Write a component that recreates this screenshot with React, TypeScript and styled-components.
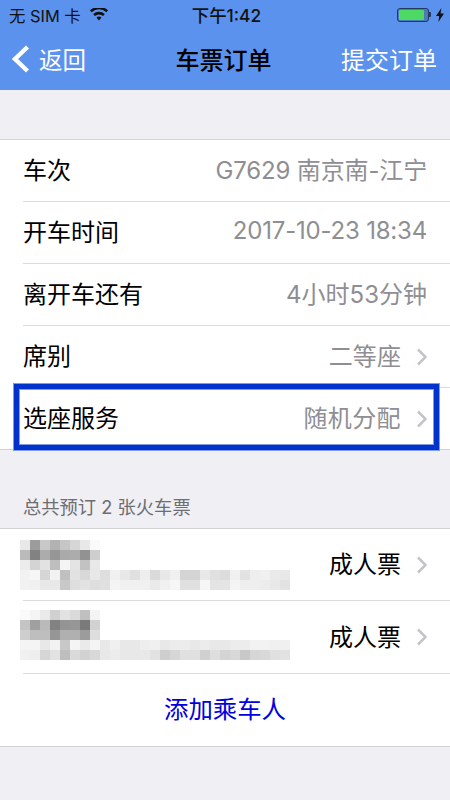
import styled, { createGlobalStyle } from "styled-components";

const FONT = `Inter, "Noto Sans CJK SC", sans-serif`;

const GlobalStyle = createGlobalStyle`
  html, body {
    margin: 0;
    padding: 0;
    background: #efeff4;
  }
  body {
    font-family: ${FONT};
    -webkit-font-smoothing: antialiased;
  }
`;

const TOP_SHADES = [
  [232, 156, 200, 178, 198, 214, 232, 250],
  [186, 130, 172, 150, 170, 172, 146, 206],
  [236, 212, 226, 190, 244, 228, 194, 232],
];
const BOTTOM_SHADES = [
  [242, 246, 214, 242, 192, 226, 216, 232, 222, 240, 232, 224, 238, 218, 232, 240, 212, 212, 232, 224, 220, 240, 226, 238, 240, 234, 232],
  [242, 240, 232, 232, 200, 222, 226, 222, 224, 244, 240, 240, 240, 234, 240, 246, 224, 224, 246, 228, 228, 244, 238, 238, 236, 232, 226],
];
const TOP_SHADES_2 = [
  [250, 244, 234, 208, 226, 218, 192, 244],
  [196, 160, 186, 130, 148, 150, 122, 210],
  [206, 190, 190, 150, 176, 176, 156, 222],
];
const BOTTOM_SHADES_2 = [
  [244, 244, 232, 242, 200, 244, 234, 244, 232, 240, 232, 232, 238, 240, 232, 236, 236, 232, 236, 232, 232, 236, 236, 242, 242, 240, 240],
  [240, 238, 214, 226, 190, 218, 210, 216, 232, 236, 232, 232, 232, 226, 206, 214, 224, 224, 208, 222, 212, 216, 200, 214, 216, 224, 226],
];

function Chevron() {
  return (
    <ChevronIcon viewBox="0 0 13 20" aria-hidden="true">
      <path d="M3 2.5 10.5 10 3 17.5" fill="none" stroke="#c4c4c9" strokeWidth="2.5" />
    </ChevronIcon>
  );
}

function Mosaic({ top, bottom, offset }: { top: number[][]; bottom: number[][]; offset: number }) {
  const cells = (rows: number[][]) =>
    rows.flat().map((shade, i) => <MosaicCell key={i} $shade={shade} />);
  return (
    <MosaicWrapper $offset={offset}>
      <MosaicTop>{cells(top)}</MosaicTop>
      <MosaicBottom>{cells(bottom)}</MosaicBottom>
    </MosaicWrapper>
  );
}

function InfoRow({
  label,
  value,
  chevron,
  height = 62,
  spacing = 0,
}: {
  label: string;
  value: string;
  chevron?: boolean;
  height?: number;
  spacing?: number;
}) {
  return (
    <Row $height={height}>
      <Label>{label}</Label>
      <Value $spacing={spacing}>{value}</Value>
      {chevron && <Chevron />}
    </Row>
  );
}

export default function App() {
  return (
    <Page>
      <GlobalStyle />
      <Header>
        <StatusBar>
          <StatusLeft>
            <span>无 SIM 卡</span>
            <svg width="18" height="13" viewBox="0 0 18 13" aria-hidden="true">
              <path
                d="M9 12.5 6.5 9.6a3.6 3.6 0 0 1 5 0zM4.9 8 3.2 6a8.6 8.6 0 0 1 11.6 0l-1.7 2a6 6 0 0 0-8.2 0zM1.6 4.2 0 2.3a13.4 13.4 0 0 1 18 0l-1.6 1.9a10.9 10.9 0 0 0-14.8 0z"
                fill="#111"
              />
            </svg>
          </StatusLeft>
          <StatusTime>下午1:42</StatusTime>
          <StatusRight>
            <Battery>
              <BatteryFill />
            </Battery>
            <BatteryCap />
            <svg width="8" height="14" viewBox="0 0 8 14" aria-hidden="true">
              <path d="M5.4 0 0 8h3.2L2.4 14 8 5.6H4.6z" fill="#111" />
            </svg>
          </StatusRight>
        </StatusBar>
        <NavBar>
          <BackLink>
            <svg width="20" height="30" viewBox="0 0 20 30" aria-hidden="true">
              <path d="M17.5 3 5 15l12.5 12" fill="none" stroke="#fff" strokeWidth="4.4" />
            </svg>
            <BackText>返回</BackText>
          </BackLink>
          <NavTitle>车票订单</NavTitle>
          <NavAction>提交订单</NavAction>
        </NavBar>
      </Header>

      <DetailSection>
        <InfoRow label="车次" value="G7629 南京南-江宁" spacing={-0.15} />
        <InfoRow label="开车时间" value="2017-10-23 18:34" spacing={-0.2} />
        <InfoRow label="离开车还有" value="4小时53分钟" />
        <InfoRow label="席别" value="二等座" chevron spacing={0.1} />
        <InfoRow label="选座服务" value="随机分配" chevron spacing={0.4} height={61} />
        <Highlight />
      </DetailSection>

      <SectionTitle>总共预订 2 张火车票</SectionTitle>

      <PassengerSection>
        <PassengerRow $height={72}>
          <Mosaic top={TOP_SHADES} bottom={BOTTOM_SHADES} offset={11} />
          <TicketType>成人票</TicketType>
          <Chevron />
        </PassengerRow>
        <PassengerRow $height={73}>
          <Mosaic top={TOP_SHADES_2} bottom={BOTTOM_SHADES_2} offset={9} />
          <TicketType>成人票</TicketType>
          <Chevron />
        </PassengerRow>
        <AddRow>添加乘车人</AddRow>
      </PassengerSection>
    </Page>
  );
}

const Page = styled.div`
  width: 450px;
  height: 800px;
  overflow: hidden;
  background: #efeff4;
  font-family: ${FONT};
`;

const Header = styled.header`
  height: 90px;
  background: #5b92ed;
`;

const StatusBar = styled.div`
  display: grid;
  grid-template-columns: 1fr auto 1fr;
  align-items: center;
  height: 29px;
  padding: 0 6px 0 9px;
  font-size: 16.4px;
  color: #111;
`;

const StatusLeft = styled.div`
  display: flex;
  align-items: center;
  gap: 9px;
`;

const StatusTime = styled.div`
  font-size: 17.4px;
  font-weight: 500;
`;

const StatusRight = styled.div`
  display: flex;
  align-items: center;
  justify-content: flex-end;
`;

const Battery = styled.div`
  box-sizing: border-box;
  width: 32px;
  height: 14px;
  padding: 1px;
  border: 1px solid #23395f;
  border-radius: 3px;
  background: #4f78b8;
`;

const BatteryFill = styled.div`
  width: 25px;
  height: 100%;
  border-radius: 1px;
  background: #4cd964;
`;

const BatteryCap = styled.div`
  width: 2px;
  height: 5px;
  margin-right: 5px;
  border-radius: 0 1px 1px 0;
  background: #23395f;
`;

const NavBar = styled.nav`
  display: grid;
  grid-template-columns: 1fr auto 1fr;
  align-items: center;
  height: 61px;
  padding: 0 13px 2px 10px;
  box-sizing: border-box;
  font-size: 24px;
`;

const BackLink = styled.div`
  display: flex;
  align-items: center;
  gap: 9px;
  color: #fff;
`;

const BackText = styled.span`
  font-size: 23.5px;
`;

const NavTitle = styled.div`
  font-weight: 500;
  color: #000;
`;

const NavAction = styled.div`
  justify-self: end;
  color: #fff;
`;

const DetailSection = styled.section`
  position: relative;
  margin-top: 49px;
  padding-left: 23px;
  background: #fff;
  border-top: 1px solid #d1d1d6;
  border-bottom: 1px solid #d1d1d6;
`;

const Row = styled.div<{ $height: number }>`
  box-sizing: border-box;
  display: flex;
  align-items: center;
  height: ${(p) => p.$height}px;
  padding-right: 23px;
  padding-bottom: 4px;
  border-bottom: 1px solid #dcdce0;

  &:nth-last-child(2) {
    border-bottom: none;
  }
`;

const Label = styled.span`
  flex: 1;
  font-size: 24px;
  color: #000;
`;

const Value = styled.span<{ $spacing: number }>`
  font-size: 24px;
  letter-spacing: ${(p) => p.$spacing}px;
  color: #8e8e93;
`;

const ChevronIcon = styled.svg`
  flex: none;
  width: 13px;
  height: 20px;
  margin: 4px -1px 0 14px;
`;

const Highlight = styled.div`
  position: absolute;
  left: 14px;
  right: 11px;
  bottom: -1px;
  height: 66px;
  box-sizing: border-box;
  border: 5px solid #0033cc;
  box-shadow: 0 0 0 1px #7f9be6, inset 0 0 0 1px #7f9be6;
  pointer-events: none;
`;

const SectionTitle = styled.h2`
  margin: 0;
  padding: 46px 23px 10px;
  font-size: 18.3px;
  line-height: 22px;
  font-weight: 400;
  color: #6d6d72;
`;

const PassengerSection = styled.section`
  padding-left: 23px;
  background: #fff;
  border-top: 1px solid #d1d1d6;
  border-bottom: 1px solid #d1d1d6;
`;

const PassengerRow = styled.div<{ $height: number }>`
  box-sizing: border-box;
  position: relative;
  display: flex;
  align-items: center;
  justify-content: flex-end;
  height: ${(p) => p.$height}px;
  padding-right: 23px;
  padding-bottom: 4px;
  border-bottom: 1px solid #dcdce0;
`;

const MosaicWrapper = styled.div<{ $offset: number }>`
  position: absolute;
  left: -3px;
  top: ${(p) => p.$offset}px;
  filter: blur(0.6px);
`;

const MosaicTop = styled.div`
  display: grid;
  grid-template-columns: repeat(8, 10px);
  grid-auto-rows: 10px;
`;

const MosaicBottom = styled.div`
  display: grid;
  grid-template-columns: repeat(27, 10px);
  grid-auto-rows: 10px;
`;

const MosaicCell = styled.span<{ $shade: number }>`
  background: rgb(${(p) => p.$shade}, ${(p) => p.$shade}, ${(p) => p.$shade});
`;

const TicketType = styled.span`
  font-size: 24px;
  color: #000;
`;

const AddRow = styled.div`
  box-sizing: border-box;
  display: flex;
  align-items: center;
  justify-content: center;
  height: 72px;
  margin-left: -23px;
  padding-bottom: 5px;
  font-size: 24.4px;
  color: #0000e0;
`;
